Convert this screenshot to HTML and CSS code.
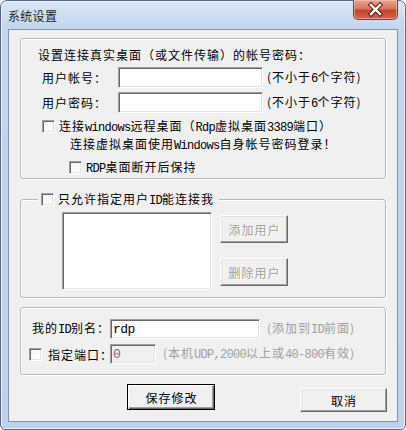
FILE: index.html
```html
<!DOCTYPE html>
<html>
<head>
  <meta charset="utf-8">
  <title>系统设置</title>
  <link rel="stylesheet" href="styles.css">
</head>
<body>
  <div class="window">
    <div class="titlebar">
      <span class="title">系统设置</span>
      <div class="close">
        <svg width="43" height="19" viewBox="0 0 43 19">
          <path d="M17 5 L26 14 M26 5 L17 14" stroke="#5a2118" stroke-width="4.5" stroke-linecap="square" fill="none"/>
          <path d="M17 5 L26 14 M26 5 L17 14" stroke="#fff" stroke-width="2.4" stroke-linecap="square" fill="none"/>
        </svg>
      </div>
    </div>

    <div class="client">
      <!-- account box -->
      <div class="group account">
        <div class="intro">设置连接真实桌面（或文件传输）的帐号密码：</div>
        <div class="field">
          <span class="field-label">用户帐号：</span>
          <input class="text-box" type="text">
          <span class="hint">(不小于<span class="en">6</span>个字符)</span>
        </div>
        <div class="field">
          <span class="field-label">用户密码：</span>
          <input class="text-box" type="password">
          <span class="hint">(不小于<span class="en">6</span>个字符)</span>
        </div>
        <label class="check-row">
          <input class="check" type="checkbox">
          <span>连接<span class="en">windows</span>远程桌面（<span class="en">Rdp</span>虚拟桌面<span class="en">3389</span>端口）</span>
        </label>
        <div class="note">连接虚拟桌面使用<span class="en">Windows</span>自身帐号密码登录！</div>
        <label class="check-row sub-check">
          <input class="check" type="checkbox">
          <span><span class="en">RDP</span>桌面断开后保持</span>
        </label>
      </div>

      <!-- allowed users box -->
      <div class="group allow">
        <label class="legend">
          <input class="check" type="checkbox">
          <span>只允许指定用户<span class="en">ID</span>能连接我</span>
        </label>
        <div class="list-box"></div>
        <div class="side-buttons">
          <button class="btn" disabled>添加用户</button>
          <button class="btn" disabled>删除用户</button>
        </div>
      </div>

      <!-- alias / port box -->
      <div class="group alias">
        <div class="alias-row">
          <span class="alias-label">我的<span class="en">ID</span>别名：</span>
          <input class="text-box alias-input" type="text" value="rdp">
          <span class="hint muted">(添加到<span class="en">ID</span>前面)</span>
        </div>
        <div class="alias-row port-row">
          <input class="check" type="checkbox">
          <span class="port-label">指定端口：</span>
          <input class="text-box port-input" type="text" value="0" disabled>
          <span class="hint muted">(本机<span class="en">UDP,2000</span>以上或<span class="en">40-800</span>有效)</span>
        </div>
      </div>

      <div class="actions">
        <button class="btn btn-default">保存修改</button>
        <button class="btn btn-cancel">取消</button>
      </div>
    </div>
  </div>
</body>
</html>
```

FILE: styles.css
```css
* {
  box-sizing: border-box;
}
body {
  margin: 0;
  background: #fff;
  font-family: "Noto Sans CJK SC", "Noto Sans", sans-serif;
  font-size: 12px;
  letter-spacing: 1px;
  line-height: 15px;
  color: #000;
}
.en {
  font-family: "Liberation Mono", monospace;
  font-size: 12px;
  letter-spacing: -0.7px;
}
.window {
  width: 406px;
  height: 430px;
  display: flex;
  flex-direction: column;
  padding: 0 7px 7px;
  border: 1px solid #56698a;
  border-radius: 7px 7px 5px 5px;
  background: linear-gradient(to bottom, #d9e6f5, #c2d6ee 28px, #bdd3ec);
  box-shadow: inset 1px 1px 0 #eaf1fa, inset -1px -1px 0 #eaf1fa;
}
.titlebar {
  height: 28px;
  display: flex;
  align-items: flex-start;
}
.title {
  padding-top: 7px;
  font-size: 12px;
  letter-spacing: 0.3px;
  line-height: 15px;
  color: #1e1e1e;
}
.close {
  margin-left: auto;
  margin-top: -1px;
  width: 45px;
  height: 20px;
  display: flex;
  justify-content: center;
  border: 1px solid #8e3b2e;
  border-top: none;
  border-radius: 0 0 5px 5px;
  background: linear-gradient(to bottom, #e8a493, #d9765f 45%, #c4452b 55%, #d0654b);
  box-shadow: inset 0 0 0 1px rgba(255, 210, 200, 0.5);
}
.client {
  height: 393px;
  padding: 8px 0 0 11px;
  border: 1px solid #8193ad;
  background: #f0f0f0;
}

/* group boxes */
.group {
  width: 366px;
  border: 1px solid #b3b9be;
  border-radius: 3px;
  box-shadow: inset 1px 1px 0 #fff, 1px 1px 0 #fff;
}
.account {
  height: 141px;
  padding: 8px 0 0 17px;
}
.intro {
  white-space: nowrap;
}
.field {
  height: 21px;
  display: flex;
  align-items: center;
  margin-top: 5px;
  padding-left: 4px;
}
.field + .field {
  margin-top: 4px;
}
.field-label {
  width: 76px;
}
.text-box {
  width: 145px;
  height: 21px;
  margin: 0;
  padding: 1px 2px 0;
  font-family: "Liberation Mono", monospace;
  font-size: 13px;
  letter-spacing: -0.5px;
  background: #fff;
  border: 1px solid;
  border-color: #a0a0a0 #fff #fff #a0a0a0;
  box-shadow: inset 1px 1px 0 #696969, inset -1px -1px 0 #e3e3e3;
  outline: none;
}
.hint {
  margin-left: 4px;
  white-space: nowrap;
}
.muted {
  color: #a0a0a0;
}
.check {
  appearance: none;
  -webkit-appearance: none;
  width: 13px;
  height: 13px;
  margin: 0;
  flex: none;
  background: linear-gradient(135deg, #f4f4f4, #fff);
  border: 1px solid;
  border-color: #a0a0a0 #fff #fff #a0a0a0;
  box-shadow: inset 1px 1px 0 #696969, inset -1px -1px 0 #e3e3e3;
}
.check-row {
  height: 15px;
  display: flex;
  align-items: center;
  gap: 4px;
  margin-top: 6px;
  padding-left: 4px;
  white-space: nowrap;
}
.note {
  margin-top: 2px;
  padding-left: 32px;
  white-space: nowrap;
}
.sub-check {
  margin-top: 6px;
  padding-left: 31px;
}

/* allowed users */
.allow {
  position: relative;
  height: 99px;
  margin-top: 20px;
  padding: 12px 0 0 41px;
  display: flex;
  gap: 8px;
}
.legend {
  position: absolute;
  top: -8px;
  left: 17px;
  height: 15px;
  display: flex;
  align-items: center;
  gap: 4px;
  padding: 0 5px 0 3px;
  background: #f0f0f0;
  white-space: nowrap;
}
.list-box {
  width: 150px;
  height: 78px;
  background: #fff;
  border: 1px solid;
  border-color: #a0a0a0 #fff #fff #a0a0a0;
  box-shadow: inset 1px 1px 0 #696969, inset -1px -1px 0 #e3e3e3;
}
.side-buttons {
  display: flex;
  flex-direction: column;
  gap: 15px;
  padding-top: 3px;
}
.btn {
  width: 68px;
  height: 28px;
  padding: 0 0 0 1px;
  font: inherit;
  letter-spacing: 1px;
  color: #000;
  background: #f0f0f0;
  border: 1px solid;
  border-color: #fff #696969 #696969 #fff;
  box-shadow: inset -1px -1px 0 #a0a0a0, inset 1px 1px 0 #e3e3e3;
}
.btn:disabled {
  color: #a0a0a0;
  text-shadow: 1px 1px 0 #fff;
}

/* alias and port */
.alias {
  height: 68px;
  margin-top: 9px;
  padding-top: 11px;
}
.alias-row {
  height: 20px;
  display: flex;
  align-items: center;
  padding-left: 11px;
}
.alias-label {
  width: 78px;
  white-space: nowrap;
}
.alias-input {
  width: 150px;
  height: 20px;
}
.alias-row .hint {
  margin-left: 7px;
}
.port-row {
  margin-top: 5px;
  padding-left: 8px;
}
.port-row .check {
  margin-right: 6px;
}
.port-label {
  width: 62px;
  white-space: nowrap;
}
.port-input {
  width: 46px;
  height: 20px;
  color: #6d6d6d;
  background: #f0f0f0;
}

/* bottom buttons */
.actions {
  display: flex;
  align-items: flex-start;
  margin-top: 9px;
}
.btn-default {
  width: 88px;
  height: 26px;
  margin-left: 107px;
  border-color: #000;
  box-shadow: inset 1px 1px 0 #fff, inset -1px -1px 0 #696969, inset -2px -2px 0 #a0a0a0;
}
.btn-cancel {
  width: 87px;
  height: 24px;
  margin-top: 4px;
  margin-left: 85px;
}
```
